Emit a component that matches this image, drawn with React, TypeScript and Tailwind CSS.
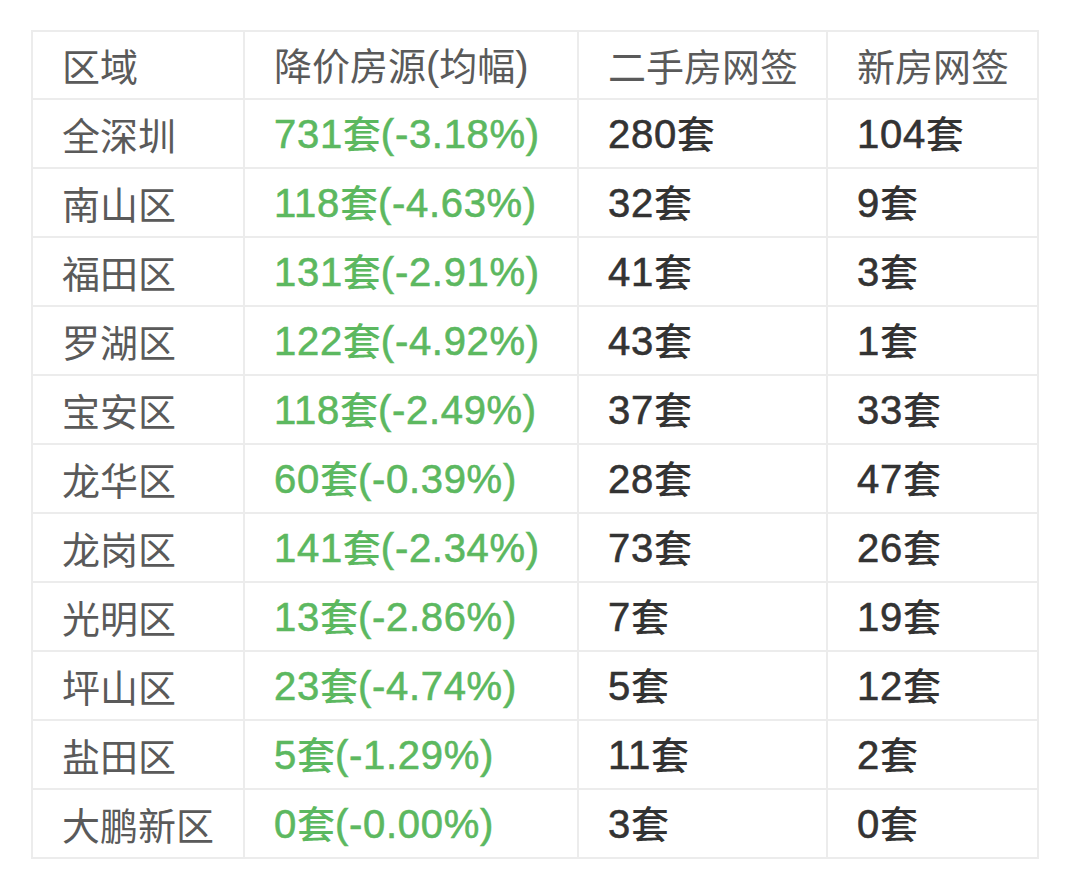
import React from 'react';

const rows = [
  ['全深圳', '731套(-3.18%)', '280套', '104套'],
  ['南山区', '118套(-4.63%)', '32套', '9套'],
  ['福田区', '131套(-2.91%)', '41套', '3套'],
  ['罗湖区', '122套(-4.92%)', '43套', '1套'],
  ['宝安区', '118套(-2.49%)', '37套', '33套'],
  ['龙华区', '60套(-0.39%)', '28套', '47套'],
  ['龙岗区', '141套(-2.34%)', '73套', '26套'],
  ['光明区', '13套(-2.86%)', '7套', '19套'],
  ['坪山区', '23套(-4.74%)', '5套', '12套'],
  ['盐田区', '5套(-1.29%)', '11套', '2套'],
  ['大鹏新区', '0套(-0.00%)', '3套', '0套'],
];

const cell = 'border-2 border-[#ececec] pl-[29px] text-left align-middle whitespace-nowrap';

// latin runs get a wider sans so digits match the screenshot
function Mixed({ text, strong }: { text: string; strong?: boolean }) {
  const parts = text.split(/([\u4e00-\u9fff]+)/).filter(Boolean);
  return (
    <>
      {parts.map((p, i) =>
        /[\u4e00-\u9fff]/.test(p) ? (
          <span key={i}>{p}</span>
        ) : (
          <span
            key={i}
            className={`font-['Liberation_Sans',sans-serif] text-[40px] font-normal ${
              strong ? 'tracking-[0.7px] [-webkit-text-stroke:0.6px_currentColor]' : ''
            }`}
          >
            {p}
          </span>
        )
      )}
    </>
  );
}

export default function App() {
  return (
    <div
      className="min-h-[890px] bg-white pl-[31px] pt-[30px]"
      style={{ fontFamily: '"Noto Sans CJK SC", "Noto Sans", sans-serif' }}
    >
      <table className="w-[1006px] table-fixed border-collapse text-[38px] leading-none">
        <colgroup>
          <col className="w-[212px]" />
          <col className="w-[334px]" />
          <col className="w-[249px]" />
          <col className="w-[211px]" />
        </colgroup>
        <thead>
          <tr className="h-[68px] text-[#5a5a5a]">
            <th className={`${cell} font-normal`}>区域</th>
            <th className={`${cell} font-normal`}>
              <Mixed text="降价房源(均幅)" />
            </th>
            <th className={`${cell} font-normal`}>二手房网签</th>
            <th className={`${cell} font-normal`}>新房网签</th>
          </tr>
        </thead>
        <tbody>
          {rows.map((r) => (
            <tr key={r[0]} className="h-[69px]">
              <td className={`${cell} text-[#5a5a5a]`}>{r[0]}</td>
              <td className={`${cell} font-medium text-[#5cb860]`}>
                <Mixed text={r[1]} strong />
              </td>
              <td className={`${cell} font-medium text-[#333333]`}>
                <Mixed text={r[2]} strong />
              </td>
              <td className={`${cell} font-medium text-[#333333]`}>
                <Mixed text={r[3]} strong />
              </td>
            </tr>
          ))}
        </tbody>
      </table>
    </div>
  );
}
